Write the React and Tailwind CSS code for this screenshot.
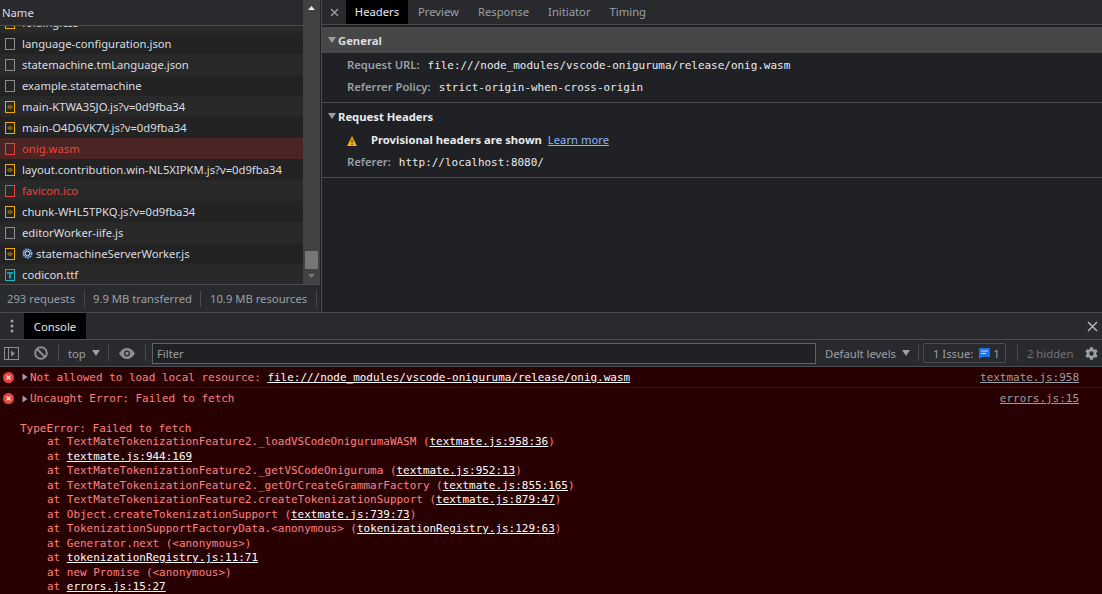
import React from "react";

const files = [
  { name: "folding.css", icon: "js" },
  { name: "language-configuration.json", icon: "plain" },
  { name: "statemachine.tmLanguage.json", icon: "plain" },
  { name: "example.statemachine", icon: "plain" },
  { name: "main-KTWA35JO.js?v=0d9fba34", icon: "js" },
  { name: "main-O4D6VK7V.js?v=0d9fba34", icon: "js" },
  { name: "onig.wasm", icon: "err", selected: true },
  { name: "layout.contribution.win-NL5XIPKM.js?v=0d9fba34", icon: "js" },
  { name: "favicon.ico", icon: "err" },
  { name: "chunk-WHL5TPKQ.js?v=0d9fba34", icon: "js" },
  { name: "editorWorker-iife.js", icon: "plain" },
  { name: "statemachineServerWorker.js", icon: "js", gear: true },
  { name: "codicon.ttf", icon: "font" },
];

const mono = "font-['DejaVu_Sans_Mono',monospace] text-[10.96px]";

const FileIcon = ({ type }) => {
  const color = { plain: "#8a8d92", js: "#f0ab00", err: "#e8453c", font: "#12b5cb" }[type];
  return (
    <svg width="10" height="12" viewBox="0 0 10 12" className="shrink-0">
      <rect x="0.5" y="0.5" width="9" height="11" fill="none" stroke={color} />
      {type === "js" && <ellipse cx="5" cy="6" rx="2.2" ry="1.2" fill="none" stroke="#d08a00" />}
      {type === "font" && <path d="M2 3h6v2H6v4.500H4V5H2z" fill="#12a0b4" />}
    </svg>
  );
};

const Gear = () => (
  <svg width="11" height="11" viewBox="0 0 11 11" className="shrink-0">
    <circle cx="5.5" cy="5.5" r="4" fill="none" stroke="#7fb2ea" strokeWidth="2" strokeDasharray="1.7 0.6" />
    <circle cx="5.5" cy="5.5" r="2.2" fill="#202124" stroke="#e8eaed" strokeWidth="1" />
  </svg>
);

const ErrorDot = () => (
  <svg width="11" height="11" viewBox="0 0 11 11" className="shrink-0">
    <circle cx="5.5" cy="5.5" r="5.5" fill="#e8453c" />
    <path d="M3.6 3.6l3.8 3.8M7.4 3.6l-3.8 3.8" stroke="#fff" strokeWidth="1.2" />
  </svg>
);

const Expand = () => (
  <svg width="6" height="8" viewBox="0 0 6 8" className="shrink-0">
    <path d="M0.5 0.5L5.5 4L0.5 7.5z" fill="#9aa0a6" />
  </svg>
);

const Caret = ({ className = "" }) => (
  <svg viewBox="0 0 8 6" className={"shrink-0 w-[8px] h-[6px] " + className}>
    <path d="M0 0h8L4 6z" fill="#9aa0a6" />
  </svg>
);

const Sep = () => <div className="w-px h-[16px] bg-[#4a4c50] shrink-0"></div>;

const RequestList = () => (
  <div className="flex flex-col w-[303px] h-[284px] shrink-0">
    <div className="relative z-10 h-[26px] shrink-0 flex items-center pl-[2px] pt-[2px] bg-[#292a2d] border-b border-[#4a4c50] text-[#dadce0]">Name</div>
    <div className="flex-1 overflow-hidden">
      <div className="-mt-[14px]">
        {files.map((f, i) => (
          <div
            key={f.name}
            className={
              "h-[21px] flex items-center pl-[5px] gap-[7px] " +
              (f.selected ? "bg-[#4b2424] text-[#e8453c]" : f.icon === "err" ? "bg-[#292929] text-[#e8453c]" : i % 2 === 0 ? "bg-[#292929] text-[#dadce0]" : "bg-[#232323] text-[#dadce0]")
            }
          >
            <FileIcon type={f.icon} />
            {f.gear && <Gear />}
            <span className={"whitespace-nowrap pt-[2px] " + (f.gear ? "-ml-[4px]" : "")}>{f.name}</span>
          </div>
        ))}
      </div>
    </div>
  </div>
);

const Scrollbar = () => (
  <div className="w-[17px] h-[284px] shrink-0 bg-[#424242] flex flex-col items-center justify-between py-[6px]">
    <svg width="7" height="4" viewBox="0 0 7 4"><path d="M0 4h7L3.500 0z" fill="#e8eaed" /></svg>
    <div className="flex-1 flex flex-col justify-end items-center w-full pb-[5px]">
      <div className="w-[13px] h-[18px] bg-[#777777]"></div>
    </div>
    <svg width="7" height="4" viewBox="0 0 7 4"><path d="M0 0h7L3.500 4z" fill="#7a7a7a" /></svg>
  </div>
);

const NetworkLeft = () => (
  <div className="flex flex-col w-[322px] shrink-0 border-r border-[#4a4c50]">
    <div className="flex">
      <RequestList />
      <Scrollbar />
    </div>
    <div className="h-[28px] w-[320px] flex items-center border-t border-[#4a4c50] bg-[#292a2d] text-[#9aa0a6]">
      <span className="pl-[7px] pt-[2px] w-[84px]">293 requests</span>
      <Sep />
      <span className="pl-[8px] pt-[2px] w-[115px]">9.9 MB transferred</span>
      <Sep />
      <span className="pl-[9px] pt-[2px] w-[115px]">10.9 MB resources</span>
      <Sep />
    </div>
  </div>
);

const DetailRow = ({ label, value }) => (
  <div className="flex items-center h-[22px] pl-[25px] gap-[8px]">
    <span className="text-[#9aa0a6] font-semibold">{label}</span>
    <span className={mono + " text-[#e8eaed] pt-[2px]"}>{value}</span>
  </div>
);

const SectionTitle = ({ title, active }) => (
  <div className={"flex items-center h-[26px] pl-[6px] gap-[2px] font-bold " + (active ? "bg-[#474747] text-[#dadce0]" : "text-[#e8eaed]")}>
    <Caret />
    <span className="pt-[2px]">{title}</span>
  </div>
);

const Details = () => (
  <div className="flex-1 flex flex-col min-w-0">
    <div className="h-[25px] flex items-stretch bg-[#292a2d] border-b border-[#4a4c50] shrink-0">
      <div className="w-[24px] flex items-center justify-center text-[#9aa0a6]">
        <svg width="9" height="9" viewBox="0 0 9 9"><path d="M1 1l7 7M8 1l-7 7" stroke="#9aa0a6" strokeWidth="1.300" /></svg>
      </div>
      <div className="w-[62px] flex items-center justify-center bg-black text-[#e8eaed]">Headers</div>
      <div className="flex items-center gap-[19px] pl-[10px] text-[#9aa0a6]">
        <span>Preview</span>
        <span>Response</span>
        <span>Initiator</span>
        <span>Timing</span>
      </div>
    </div>
    <div className="pt-[2px]">
      <SectionTitle title="General" active />
      <div className="pt-[1px] pb-[4px] border-b border-[#4a4c50]">
        <DetailRow label="Request URL:" value="file:///node_modules/vscode-oniguruma/release/onig.wasm" />
        <DetailRow label="Referrer Policy:" value="strict-origin-when-cross-origin" />
      </div>
      <div className="pb-[4px] border-b border-[#4a4c50]">
        <SectionTitle title="Request Headers" />
        <div className="flex items-center h-[21px] mt-[1px] pl-[25px]">
          <svg width="10" height="10" viewBox="0 0 10 10" className="shrink-0"><path d="M5 0l5 10H0z" fill="#f9ab00" /><path d="M5 3.500v3.500M5 8v1" stroke="#202124" /></svg>
          <span className="ml-[14px] font-bold text-[#e8eaed]">Provisional headers are shown</span>
          <span className="ml-[6px] text-[#8ab4f8] underline">Learn more</span>
        </div>
        <DetailRow label="Referer:" value="http://localhost:8080/" />
      </div>
    </div>
  </div>
);

const ConsoleBar = () => (
  <div className="shrink-0">
    <div className="h-[28px] flex items-stretch bg-[#292a2d] border-t border-b border-[#4a4c50]">
      <div className="w-[24px] flex items-center justify-center">
        <svg width="4" height="14" viewBox="0 0 4 14"><g fill="#9aa0a6"><circle cx="2" cy="2" r="1.500" /><circle cx="2" cy="7" r="1.500" /><circle cx="2" cy="12" r="1.500" /></g></svg>
      </div>
      <div className="w-[62px] flex items-center justify-center pt-[2px] bg-black text-[#e8eaed]">Console</div>
      <div className="flex-1"></div>
      <div className="w-[20px] flex items-center justify-center">
        <svg width="11" height="11" viewBox="0 0 11 11"><path d="M1 1l9 9M10 1l-9 9" stroke="#b0b3b8" strokeWidth="1.500" /></svg>
      </div>
    </div>
    <div className="h-[27px] flex items-center bg-[#292a2d] border-b border-[#4a4c50] text-[#9aa0a6]">
      <svg width="15" height="13" viewBox="0 0 15 13" className="ml-[4px] shrink-0">
        <rect x="0.500" y="0.500" width="14" height="12" fill="none" stroke="#8a8d92" />
        <path d="M4.500 1v11" stroke="#8a8d92" />
        <path d="M7 3.500l4 3-4 3z" fill="#8a8d92" />
      </svg>
      <svg width="14" height="14" viewBox="0 0 14 14" className="ml-[15px] shrink-0">
        <circle cx="7" cy="7" r="5.800" fill="none" stroke="#8a8d92" strokeWidth="2" />
        <path d="M3 3l8 8" stroke="#8a8d92" strokeWidth="2" />
      </svg>
      <div className="ml-[10px]"><Sep /></div>
      <span className="ml-[9px] pt-[2px] w-[18px]">top</span>
      <Caret className="ml-[6px]" />
      <div className="ml-[8px]"><Sep /></div>
      <svg width="16" height="11" viewBox="0 0 16 11" className="ml-[10px] shrink-0">
        <path d="M0 5.500C2.500 1.500 5 0 8 0s5.500 1.500 8 5.500C13.500 9.500 11 11 8 11S2.500 9.500 0 5.500z" fill="#8a8d92" />
        <circle cx="8" cy="5.500" r="3" fill="#292a2d" />
        <circle cx="8" cy="5.500" r="1.700" fill="#8a8d92" />
      </svg>
      <div className="ml-[10px]"><Sep /></div>
      <div className="ml-[6px] w-[664px] h-[21px] shrink-0 flex items-center pl-[4px] pt-[2px] bg-[#202124] border border-[#5f6368] text-[#9aa0a6]">Filter</div>
      <span className="ml-[9px] pt-[2px] w-[74px] whitespace-nowrap">Default levels</span>
      <Caret className="ml-[3px]" />
      <div className="ml-[8px]"><Sep /></div>
      <div className="ml-[4px] h-[20px] w-[83px] shrink-0 flex items-center pl-[9px] border border-[#4a4c50] rounded-[2px]">
        <span className="pt-[2px]">1 Issue:</span>
        <svg width="11" height="11" viewBox="0 0 11 11" className="ml-[6px]">
          <path d="M0 0h11v9H3L0 11z" fill="#1a73e8" />
          <path d="M2 3h7M2 5.500h5" stroke="#d2e3fc" />
        </svg>
        <span className="ml-[3px] pt-[2px]">1</span>
      </div>
      <div className="ml-[11px]"><Sep /></div>
      <span className="ml-[9px] pt-[2px] w-[46px] text-[#6f7276] whitespace-nowrap">2 hidden</span>
      <svg width="15" height="15" viewBox="0 0 24 24" className="ml-[11px] shrink-0">
        <path fill="#9aa0a6" d="M19.400 13c.04-.33.06-.66.06-1s-.02-.67-.06-1l2.100-1.650c.19-.15.24-.42.12-.64l-2-3.460c-.12-.22-.39-.3-.61-.22l-2.490 1c-.52-.4-1.080-.73-1.690-.98l-.38-2.650A.49.49 0 0 0 14 2h-4c-.25 0-.46.18-.49.42l-.38 2.650c-.61.25-1.170.59-1.690.98l-2.490-1c-.23-.09-.49 0-.61.22l-2 3.460c-.13.22-.07.49.12.64L4.560 11c-.04.33-.07.67-.07 1s.03.67.07 1l-2.100 1.650c-.19.15-.25.42-.12.64l2 3.460c.12.22.39.3.61.22l2.490-1c.52.4 1.080.73 1.690.98l.38 2.650c.03.24.24.42.49.42h4c.25 0 .46-.18.49-.42l.38-2.650c.61-.25 1.170-.59 1.690-.98l2.490 1c.23.09.49 0 .61-.22l2-3.460c.12-.22.07-.49-.12-.64L19.400 13zM12 15.500a3.500 3.500 0 1 1 0-7 3.500 3.500 0 0 1 0 7z" />
      </svg>
    </div>
  </div>
);

const At = ({ pre, link, post }) => (
  <div className="h-[14.5px] leading-[14.5px] pl-[47px] whitespace-pre">
    {"at " + (pre || "")}
    {link && <span className="text-white underline">{link}</span>}
    {post}
  </div>
);

const ConsoleLog = () => (
  <div className={"flex-1 overflow-hidden bg-[#290000] text-[#ff8080] " + mono}>
    <div className="h-[21px] flex items-center border-b border-[#5c0000] pl-[3px] pr-[23px]">
      <ErrorDot />
      <div className="ml-[8px]"><Expand /></div>
      <span className="ml-[2px] pt-[2px] whitespace-pre">Not allowed to load local resource: </span>
      <span className="pt-[2px] text-white underline">file:///node_modules/vscode-oniguruma/release/onig.wasm</span>
      <span className="ml-auto pt-[2px] text-[#9aa0a6] underline">textmate.js:958</span>
    </div>
    <div className="h-[21px] flex items-center pl-[3px] pr-[23px]">
      <ErrorDot />
      <div className="ml-[8px]"><Expand /></div>
      <span className="ml-[2px] pt-[2px]">Uncaught Error: Failed to fetch</span>
      <span className="ml-auto pt-[2px] text-[#9aa0a6] underline">errors.js:15</span>
    </div>
    <div className="pt-[12px]">
      <div className="h-[14px] leading-[15px] pl-[20px]">TypeError: Failed to fetch</div>
      <At pre="TextMateTokenizationFeature2._loadVSCodeOnigurumaWASM (" link="textmate.js:958:36" post=")" />
      <At link="textmate.js:944:169" />
      <At pre="TextMateTokenizationFeature2._getVSCodeOniguruma (" link="textmate.js:952:13" post=")" />
      <At pre="TextMateTokenizationFeature2._getOrCreateGrammarFactory (" link="textmate.js:855:165" post=")" />
      <At pre="TextMateTokenizationFeature2.createTokenizationSupport (" link="textmate.js:879:47" post=")" />
      <At pre="Object.createTokenizationSupport (" link="textmate.js:739:73" post=")" />
      <At pre="TokenizationSupportFactoryData.<anonymous> (" link="tokenizationRegistry.js:129:63" post=")" />
      <At pre="Generator.next (<anonymous>)" />
      <At link="tokenizationRegistry.js:11:71" />
      <At pre="new Promise (<anonymous>)" />
      <At link="errors.js:15:27" />
    </div>
  </div>
);

export default function App() {
  return (
    <div className="w-[1102px] h-[594px] overflow-hidden flex flex-col bg-[#202124] text-[11.25px] font-['Noto_Sans',sans-serif]">
      <div className="h-[312px] flex shrink-0">
        <NetworkLeft />
        <Details />
      </div>
      <ConsoleBar />
      <ConsoleLog />
    </div>
  );
}
